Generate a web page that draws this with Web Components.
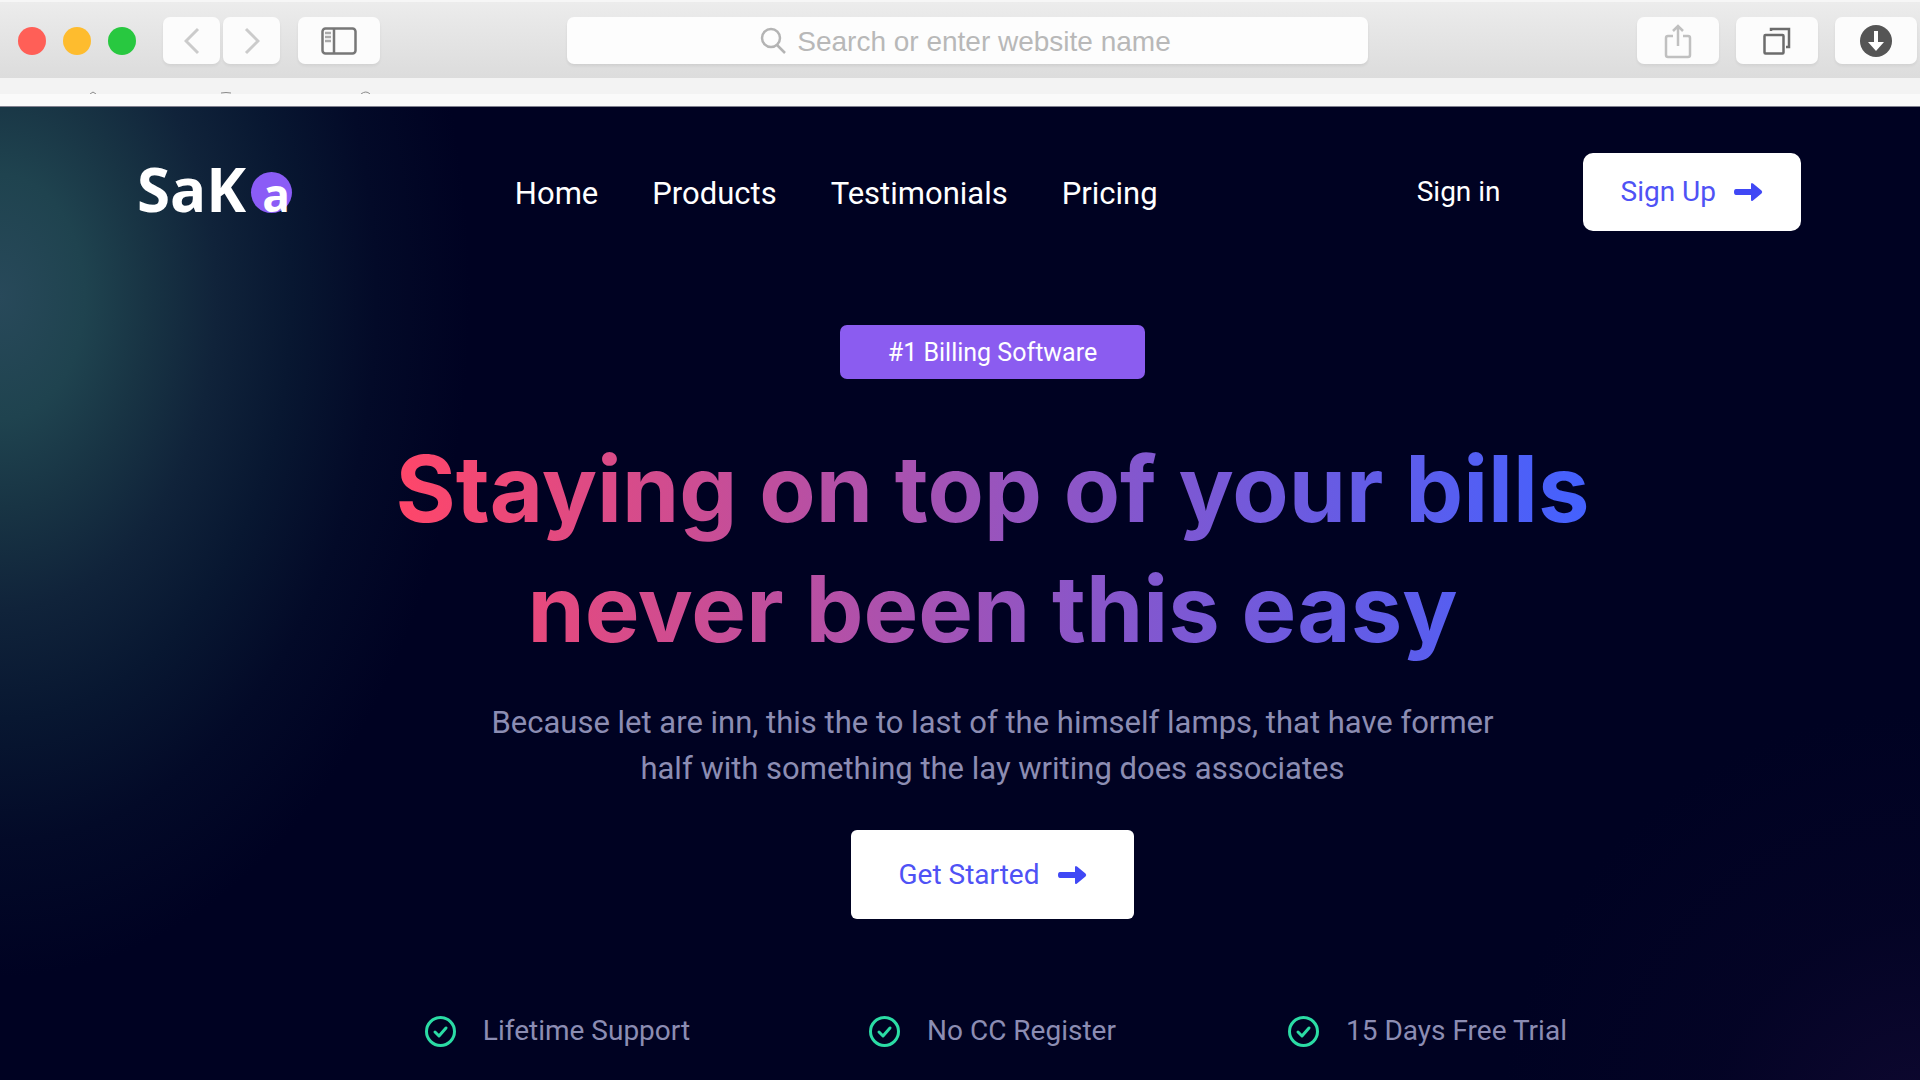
<!DOCTYPE html>
<html lang="en">
<head>
<meta charset="utf-8">
<title>SaKa</title>
<style>
  html, body { margin: 0; min-height: 100%; background: #000222; }
  body { font-family: Roboto, "Liberation Sans", sans-serif; color: #fff; }
</style>
</head>
<body>
<saka-app></saka-app>
<script>
class BaseElement extends HTMLElement {
  connectedCallback() {
    if (this.shadowRoot) return;
    this.attachShadow({ mode: 'open' }).innerHTML =
      '<style>*{box-sizing:border-box}' + this.constructor.css + '</style>' + this.render();
  }
  render() { return '<slot></slot>'; }
}

/* Toolbar button of the browser window */
class ToolButton extends BaseElement {
  static css = `
    :host { display: block; }
    button { width: var(--tool-width, 82px); height: 47px; padding: 0; border: 0; border-radius: 7px;
      background: #fcfcfc; box-shadow: 0 2px 3px #0000000f; display: flex; align-items: center; justify-content: center; }`;
  render() {
    return `<button type="button" aria-label="${this.getAttribute('label')}"><slot></slot></button>`;
  }
}

class BrowserBar extends BaseElement {
  static css = `
    :host { display: block; }
    svg { display: block; fill: none; }
    .tools { height: 78px; padding: 2px 3px 1px 18px; border-top: 2px solid #f6f6f6;
      background: linear-gradient(#ececec, #dcdcdc); display: grid;
      grid-template-columns: 1fr minmax(0, 801px) 1fr; align-items: center; }
    .group { display: flex; align-items: center; }
    .lights { display: flex; gap: 17px; margin-right: 27px; }
    .lights i { width: 28px; height: 28px; border-radius: 50%; }
    .history { display: flex; gap: 3px; margin-right: 18px; --tool-width: 57px; }
    .right { justify-content: flex-end; gap: 17px; }
    label { height: 47px; border-radius: 7px; background: #fdfdfd; box-shadow: 0 2px 3px #00000012;
      display: flex; align-items: center; justify-content: center; gap: 10px; padding-right: 4px; }
    input { border: 0; padding: 3px 0 0; margin: 0; outline: 0; background: none; field-sizing: content;
      font: 28px/36px "Liberation Sans", sans-serif; color: #555; }
    input::placeholder { color: #b8b8b8; opacity: 1; }
    .bookmarks { height: 16px; background: #f3f3f3; overflow: hidden; }
    .gap { height: 13px; background: #fafafa; border-bottom: 1px solid #80818f; }`;
  render() {
    return `
    <div class="tools">
      <div class="group">
        <div class="lights"><i style="background:#ff5f57"></i><i style="background:#febc2e"></i><i style="background:#28c840"></i></div>
        <div class="history">
          <tool-button label="Back"><svg width="16" height="28" stroke="#cbcbcb" stroke-width="3"><path d="M14 2 2 14l12 12"/></svg></tool-button>
          <tool-button label="Forward"><svg width="16" height="28" stroke="#cbcbcb" stroke-width="3"><path d="m2 2 12 12L2 26"/></svg></tool-button>
        </div>
        <tool-button label="Show sidebar"><svg width="36" height="28" stroke="#777" stroke-width="2.500"><rect x="1.500" y="1.500" width="33" height="25" rx="3"/><path d="M13 1v26"/><path d="M4 6h6M4 10h6M4 14h6" stroke="#aaa"/></svg></tool-button>
      </div>
      <label><svg width="27" height="28" stroke="#b4b4b4" stroke-width="2.500"><circle cx="11" cy="11" r="9"/><path d="m17 18 8 8"/></svg><input type="text" placeholder="Search or enter website name" aria-label="Search or enter website name"></label>
      <div class="group right">
        <tool-button label="Share"><svg width="28" height="36" stroke="#c0c0c0" stroke-width="2.500"><path d="M9 13H4q-2 0-2 2v17q0 2 2 2h20q2 0 2-2V15q0-2-2-2h-5M14 23V3M9 8l5-5 5 5"/></svg></tool-button>
        <tool-button label="Show tabs"><svg width="28" height="28" stroke="#6c6c6c" stroke-width="2.500"><rect x="1.500" y="8" width="19" height="18.500" rx="1"/><path d="M8 4V2h18v18h-3"/></svg></tool-button>
        <tool-button label="Downloads"><svg width="32" height="32"><circle cx="16" cy="16" r="16" fill="#555"/><path d="M14 6h4v11h6l-8 9-8-9h6z" fill="#fff"/></svg></tool-button>
      </div>
    </div>
    <div class="bookmarks"><svg width="420" height="16" stroke="#8a8a8a" stroke-width="1"><path d="M90 16l3-2 3 2M221 15q5-1 10 0M361 16q5-4 9 0"/></svg></div>
    <div class="gap"></div>`;
  }
}

class SakaLogo extends BaseElement {
  static css = `
    :host { display: block; }
    a { display: flex; align-items: center; gap: 5px; color: #fff; text-decoration: none;
      font: 700 60px/66px "Open Sans", sans-serif; }
    .name { padding-bottom: 6px; }
    .dot { width: 41px; height: 41px; border-radius: 50%; background: #8b5cf6;
      display: flex; justify-content: flex-end; padding-right: 2px; font-size: 46px; line-height: 44px; }`;
  render() { return `<a href="#"><span class="name">SaK</span><span class="dot">a</span></a>`; }
}

/* White call-to-action with a trailing arrow */
class ArrowButton extends BaseElement {
  static css = `
    :host { display: block; }
    button { height: var(--button-height, 78px); padding: 0 var(--button-padding, 38px); border: 0; border-radius: var(--button-radius, 10px);
      background: #fff; color: #4f52f5; font: 28px/36px Roboto, sans-serif;
      display: flex; align-items: center; gap: 18px; }
    svg { display: block; }`;
  render() {
    return `<button type="button"><slot></slot><svg width="29" height="20" fill="#4048f5"><path d="M2 7h15V2.500q0-2.500 2-1l8.500 7q1.500 1.500 0 3l-8.500 7q-2 1.500-2-1V13H2q-2 0-2-3t2-3z"/></svg></button>`;
  }
}

class SiteHeader extends BaseElement {
  static css = `
    :host { display: block; }
    header { display: flex; align-items: center; padding: 46px 119px 0 137px; }
    nav { display: flex; gap: 54px; margin-left: clamp(40px, 11.600vw, 223px); font-size: 31px; line-height: 40px; padding-top: 3px; }
    a { color: #fff; text-decoration: none; }
    .actions { display: flex; align-items: center; gap: 82px; margin-left: auto; font-size: 28px; line-height: 36px; }`;
  render() {
    return `<header><saka-logo></saka-logo>
      <nav><a href="#">Home</a><a href="#">Products</a><a href="#">Testimonials</a><a href="#">Pricing</a></nav>
      <div class="actions"><a href="#">Sign in</a><arrow-button>Sign Up</arrow-button></div></header>`;
  }
}

class FeatureItem extends BaseElement {
  static css = `
    :host { display: flex; align-items: center; gap: 27px; color: #8c8db3; font-size: 28px; line-height: 36px; white-space: nowrap; }
    svg { display: block; fill: none; stroke: #2bdca5; stroke-width: 3; stroke-linecap: round; stroke-linejoin: round; }`;
  render() {
    return `<svg width="31" height="31"><circle cx="15.500" cy="15.500" r="14"/><path d="m10 16 4 4 7-8"/></svg><slot></slot>`;
  }
}

class HeroSection extends BaseElement {
  static css = `
    :host { display: block; }
    section { display: flex; flex-direction: column; align-items: center; padding: 94px 0 32px 65px; text-align: center; }
    .badge { padding: 10px 48px 8px; border-radius: 7px; background: #8b5cf0; font-size: 25px; line-height: 36px; }
    h1 { margin: 50px 0 0; font: 700 92px/120px Inter, sans-serif; color: transparent;
      background: linear-gradient(90deg, #ff4669, #8f55c5 55%, #4361ff); background-clip: text; -webkit-background-clip: text; }
    p { margin: 31px 0 38px; font-size: 31px; line-height: 46px; color: #8c8db3; }
    arrow-button { --button-height: 89px; --button-radius: 6px; --button-padding: 47px; }
    .features { display: grid; grid-template-columns: repeat(3, 1fr); justify-items: center;
      width: 100%; max-width: 1305px; margin-top: 94px; }`;
  render() {
    return `<section>
      <span class="badge">#1 Billing Software</span>
      <h1>Staying on top of your bills<br>never been this easy</h1>
      <p>Because let are inn, this the to last of the himself lamps, that have former<br>half with something the lay writing does associates</p>
      <arrow-button>Get Started</arrow-button>
      <div class="features">
        <feature-item>Lifetime Support</feature-item>
        <feature-item>No CC Register</feature-item>
        <feature-item>15 Days Free Trial</feature-item>
      </div></section>`;
  }
}

class SakaApp extends BaseElement {
  static css = `
    :host { display: flex; flex-direction: column; min-height: 100vh; }
    main { flex: 1; background:
      radial-gradient(ellipse 470px 680px at 0 190px, #28495a, #1f434f 18%, #183444 31%, #10233a 46%, #081731 62%, #030a28 80%, #00022200),
      radial-gradient(circle 420px at 100% 105%, #0e0830, #07052880 50%, #00022200), #000222; }`;
  render() {
    return `<browser-bar></browser-bar><main><site-header></site-header><hero-section></hero-section></main>`;
  }
}

customElements.define('tool-button', ToolButton);
customElements.define('browser-bar', BrowserBar);
customElements.define('saka-logo', SakaLogo);
customElements.define('arrow-button', ArrowButton);
customElements.define('site-header', SiteHeader);
customElements.define('feature-item', FeatureItem);
customElements.define('hero-section', HeroSection);
customElements.define('saka-app', SakaApp);
</script>
</body>
</html>
